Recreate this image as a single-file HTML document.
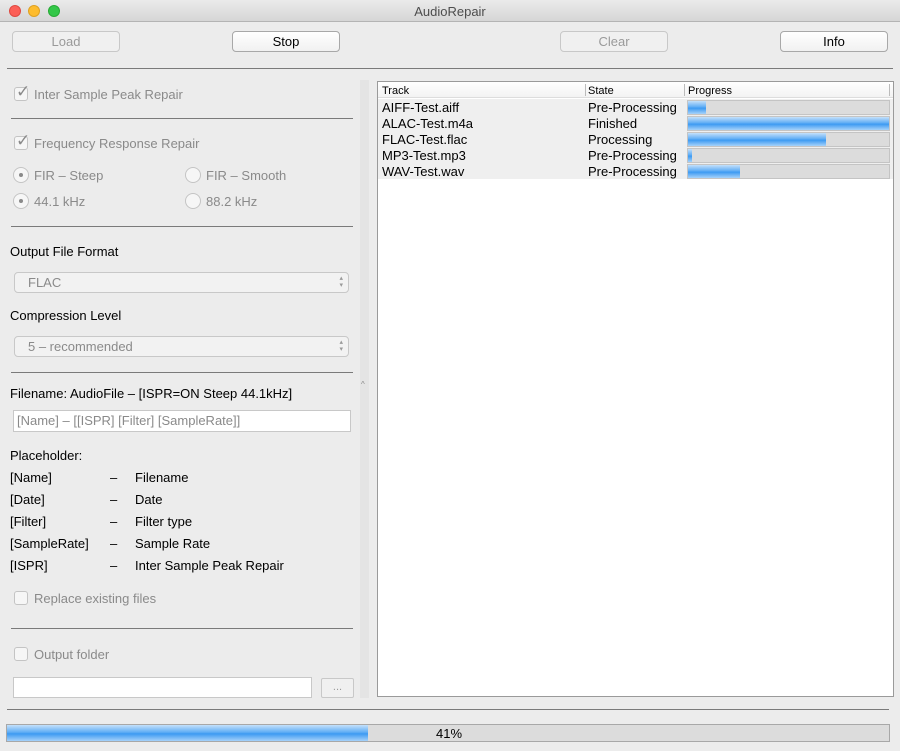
<!DOCTYPE html>
<html><head><meta charset="utf-8"><style>
*{margin:0;padding:0;box-sizing:border-box}
body{width:900px;height:751px;background:#ececec;font-family:"Liberation Sans",sans-serif;font-size:13px;color:#000;position:relative;overflow:hidden}
.a{position:absolute;white-space:nowrap}
.t{position:absolute;white-space:nowrap;line-height:16px;transform:translateY(-7px)}
.g{color:#8a8a8a}
.btn{position:absolute;height:21px;border:1px solid #a8a8a8;border-radius:4px;background:linear-gradient(#fff,#f1f1f1);text-align:center;line-height:19px;font-size:13px}
.btn.d{border-color:#c8c8c8;color:#9a9a9a;background:#f0f0f0}
.sep{position:absolute;height:1px;background:#7a7a7a}
.cb{position:absolute;width:14px;height:14px;border:1px solid #c4c4c4;border-radius:3px;background:#f6f6f6}
.rd{position:absolute;width:16px;height:16px;border:1px solid #c4c4c4;border-radius:50%;background:#f6f6f6}
.rd.on::after{content:"";position:absolute;left:5px;top:5px;width:4px;height:4px;border-radius:50%;background:#8a8a8a}
.combo{position:absolute;height:21px;border:1px solid #c8c8c8;border-radius:4px;background:#f2f2f2;color:#8a8a8a;padding-left:13px;line-height:19px}
.combo::after{content:"\25B4\A\25BE";white-space:pre;position:absolute;right:5px;top:2px;font-size:7px;line-height:7px;color:#9a9a9a}
.tf{position:absolute;background:#fff;border:1px solid #c8c8c8}
.bar{position:absolute;height:15px;background:#dcdcdc;border:1px solid #c4c4c4}
.fill{position:absolute;left:0;top:0;bottom:0;background:linear-gradient(#c4e0fb,#61aef5 45%,#3d9af2 55%,#a6d2fa)}
.ck{position:absolute;color:#8a8a8a;font-size:17px;line-height:17px}
</style></head><body>
<div class="a" style="left:0;top:0;width:900px;height:22px;background:linear-gradient(#ebebeb,#d6d6d6);border-bottom:1px solid #b4b4b4"></div>
<div class="a" style="left:9px;top:5px;width:12px;height:12px;border-radius:50%;background:#fc5f57;border:1px solid #de4a42"></div>
<div class="a" style="left:28px;top:5px;width:12px;height:12px;border-radius:50%;background:#fdbc2e;border:1px solid #dea123"></div>
<div class="a" style="left:48px;top:5px;width:12px;height:12px;border-radius:50%;background:#33c748;border:1px solid #27aa35"></div>
<div class="t" style="left:0;width:900px;text-align:center;top:11px;color:#4d4d4d">AudioRepair</div>

<div class="btn d" style="left:12px;top:31px;width:108px">Load</div>
<div class="btn" style="left:232px;top:31px;width:108px">Stop</div>
<div class="btn d" style="left:560px;top:31px;width:108px">Clear</div>
<div class="btn" style="left:780px;top:31px;width:108px">Info</div>
<div class="sep" style="left:7px;top:68px;width:886px"></div>

<div class="cb" style="left:14px;top:87px"></div><div class="ck" style="left:16px;top:83px">✓</div>
<div class="t g" style="left:34px;top:94px">Inter Sample Peak Repair</div>
<div class="sep" style="left:11px;top:118px;width:342px"></div>
<div class="cb" style="left:14px;top:136px"></div><div class="ck" style="left:16px;top:132px">✓</div>
<div class="t g" style="left:34px;top:143px">Frequency Response Repair</div>
<div class="rd on" style="left:13px;top:167px"></div><div class="t g" style="left:34px;top:175px">FIR – Steep</div>
<div class="rd" style="left:185px;top:167px"></div><div class="t g" style="left:206px;top:175px">FIR – Smooth</div>
<div class="rd on" style="left:13px;top:193px"></div><div class="t g" style="left:34px;top:201px">44.1 kHz</div>
<div class="rd" style="left:185px;top:193px"></div><div class="t g" style="left:206px;top:201px">88.2 kHz</div>
<div class="sep" style="left:11px;top:226px;width:342px"></div>
<div class="t" style="left:10px;top:251px">Output File Format</div>
<div class="combo" style="left:14px;top:272px;width:335px">FLAC</div>
<div class="t" style="left:10px;top:315px">Compression Level</div>
<div class="combo" style="left:14px;top:336px;width:335px">5 – recommended</div>
<div class="sep" style="left:11px;top:372px;width:342px"></div>
<div class="t" style="left:10px;top:393px">Filename: AudioFile – [ISPR=ON Steep 44.1kHz]</div>
<div class="tf g" style="left:13px;top:410px;width:338px;height:22px;padding-left:3px;line-height:20px">[Name] – [[ISPR] [Filter] [SampleRate]]</div>
<div class="t" style="left:10px;top:455px">Placeholder:</div>
<div class="t" style="left:10px;top:477px">[Name]</div><div class="t" style="left:110px;top:477px">–</div><div class="t" style="left:135px;top:477px">Filename</div>
<div class="t" style="left:10px;top:499px">[Date]</div><div class="t" style="left:110px;top:499px">–</div><div class="t" style="left:135px;top:499px">Date</div>
<div class="t" style="left:10px;top:521px">[Filter]</div><div class="t" style="left:110px;top:521px">–</div><div class="t" style="left:135px;top:521px">Filter type</div>
<div class="t" style="left:10px;top:543px">[SampleRate]</div><div class="t" style="left:110px;top:543px">–</div><div class="t" style="left:135px;top:543px">Sample Rate</div>
<div class="t" style="left:10px;top:565px">[ISPR]</div><div class="t" style="left:110px;top:565px">–</div><div class="t" style="left:135px;top:565px">Inter Sample Peak Repair</div>
<div class="cb" style="left:14px;top:591px"></div><div class="t g" style="left:34px;top:598px">Replace existing files</div>
<div class="sep" style="left:11px;top:628px;width:342px"></div>
<div class="cb" style="left:14px;top:647px"></div><div class="t g" style="left:34px;top:654px">Output folder</div>
<div class="tf" style="left:13px;top:677px;width:299px;height:21px"></div>
<div class="btn d" style="left:321px;top:678px;width:33px;height:20px;border-radius:2px;line-height:16px;font-size:11px">...</div>

<div class="a" style="left:360px;top:80px;width:9px;height:618px;background:#e4e4e4"></div>
<div class="a g" style="left:361px;top:380px;font-size:8px">^</div>

<div class="a" style="left:377px;top:81px;width:517px;height:616px;background:#fff;border:1px solid #9a9a9a"></div>
<div class="a" style="left:378px;top:82px;width:515px;height:16px;background:linear-gradient(#fff,#f3f3f3);border-bottom:1px solid #ddd"></div>
<div class="a" style="left:585px;top:84px;width:1px;height:12px;background:#bbb"></div>
<div class="a" style="left:684px;top:84px;width:1px;height:12px;background:#bbb"></div>
<div class="a" style="left:889px;top:84px;width:1px;height:12px;background:#bbb"></div>
<div class="t" style="left:382px;top:90px;font-size:11px">Track</div>
<div class="t" style="left:588px;top:90px;font-size:11px">State</div>
<div class="t" style="left:688px;top:90px;font-size:11px">Progress</div>
<div class="a" style="left:378px;top:99px;width:515px;height:80px;background:#efefef"></div>
<div class="t" style="left:382px;top:107px">AIFF-Test.aiff</div><div class="t" style="left:588px;top:107px">Pre-Processing</div>
<div class="t" style="left:382px;top:123px">ALAC-Test.m4a</div><div class="t" style="left:588px;top:123px">Finished</div>
<div class="t" style="left:382px;top:139px">FLAC-Test.flac</div><div class="t" style="left:588px;top:139px">Processing</div>
<div class="t" style="left:382px;top:155px">MP3-Test.mp3</div><div class="t" style="left:588px;top:155px">Pre-Processing</div>
<div class="t" style="left:382px;top:171px">WAV-Test.wav</div><div class="t" style="left:588px;top:171px">Pre-Processing</div>
<div class="bar" style="left:687px;top:100px;width:203px"><div class="fill" style="width:18px"></div></div>
<div class="bar" style="left:687px;top:116px;width:203px"><div class="fill" style="width:201px"></div></div>
<div class="bar" style="left:687px;top:132px;width:203px"><div class="fill" style="width:138px"></div></div>
<div class="bar" style="left:687px;top:148px;width:203px"><div class="fill" style="width:4px"></div></div>
<div class="bar" style="left:687px;top:164px;width:203px"><div class="fill" style="width:52px"></div></div>

<div class="sep" style="left:7px;top:709px;width:882px"></div>
<div class="bar" style="left:6px;top:724px;width:884px;height:18px;border-color:#a8a8a8"><div class="fill" style="width:361px"></div></div>
<div class="t" style="left:436px;top:733px">41%</div>
</body></html>
